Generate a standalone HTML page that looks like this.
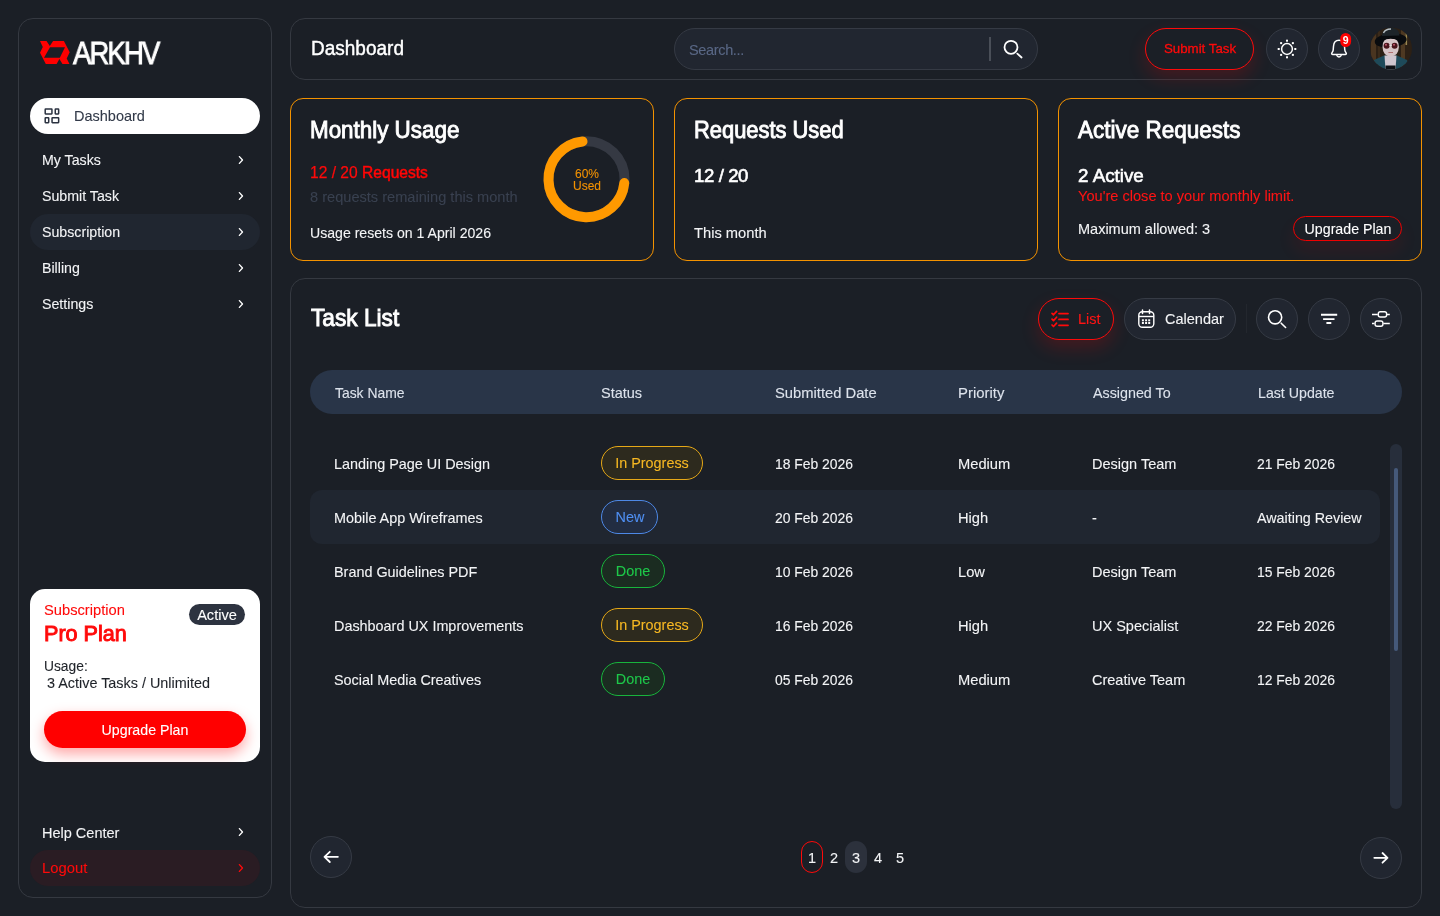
<!DOCTYPE html><html><head><meta charset="utf-8"><style>
html,body{margin:0;padding:0;}
body{width:1440px;height:916px;background:#1b1f26;position:relative;overflow:hidden;font-family:"Liberation Sans", sans-serif;}
.t{position:absolute;white-space:nowrap;line-height:1;will-change:transform;-webkit-text-stroke:0.1px currentColor;}
.b{position:absolute;box-sizing:border-box;}
svg{position:absolute;left:0;top:0;overflow:visible;}
</style></head><body>
<div class="b" style="left:18px;top:18px;width:254px;height:880px;border:1px solid #353941;border-radius:15px;"></div>
<div class="b" style="left:30px;top:98px;width:230px;height:36px;background:#ffffff;border-radius:18px;"></div>
<div class="b" style="left:30px;top:214px;width:230px;height:36px;background:#202630;border-radius:18px;"></div>
<div class="t" style="left:73.6px;top:109.00px;font-size:14.5px;color:#323a49;">Dashboard</div>
<div class="t" style="left:41.5px;top:153.00px;font-size:14.2px;color:#f3f4f6;">My Tasks</div>
<div class="t" style="left:41.5px;top:189.00px;font-size:14.2px;color:#f3f4f6;">Submit Task</div>
<div class="t" style="left:41.5px;top:225.00px;font-size:14.2px;color:#f3f4f6;">Subscription</div>
<div class="t" style="left:41.5px;top:261.00px;font-size:14.2px;color:#f3f4f6;">Billing</div>
<div class="t" style="left:41.5px;top:297.00px;font-size:14.2px;color:#f3f4f6;">Settings</div>
<div class="b" style="left:30px;top:589px;width:230px;height:173px;background:#ffffff;border-radius:15px;"></div>
<div class="t" style="left:44px;top:603.00px;font-size:14.7px;color:#ff0a0a;">Subscription</div>
<div class="t" style="left:44px;top:623.00px;font-size:21.6px;color:#ff0a0a;-webkit-text-stroke:0.95px #ff0a0a;">Pro Plan</div>
<div class="b" style="left:189px;top:604px;width:56px;height:21px;background:#2d3340;border-radius:11px;"></div>
<div class="t" style="left:17px;width:400px;text-align:center;top:608.00px;font-size:14.6px;color:#ffffff;">Active</div>
<div class="t" style="left:44px;top:660.00px;font-size:13.8px;color:#1f2329;">Usage:</div>
<div class="t" style="left:42.7px;top:676.00px;font-size:14.4px;color:#1f2329;">&nbsp;3 Active Tasks / Unlimited</div>
<div class="b" style="left:44px;top:711px;width:202px;height:37px;background:#ff0000;border-radius:19px;box-shadow:0 6px 14px rgba(255,0,0,0.35);"></div>
<div class="t" style="left:-55px;width:400px;text-align:center;top:723.00px;font-size:14.2px;color:#ffffff;">Upgrade Plan</div>
<div class="t" style="left:41.5px;top:826.00px;font-size:14.5px;color:#f3f4f6;">Help Center</div>
<div class="b" style="left:30px;top:850px;width:230px;height:36px;background:#2a1c23;border-radius:18px;"></div>
<div class="t" style="left:41.5px;top:861.00px;font-size:14.8px;color:#ff0a0a;">Logout</div>
<div class="b" style="left:290px;top:18px;width:1132px;height:62px;border:1px solid #353941;border-radius:15px;"></div>
<div class="t" style="left:311px;top:39.00px;font-size:19px;color:#ffffff;transform:scaleY(1.05);transform-origin:0 16px;-webkit-text-stroke:0.4px #ffffff;">Dashboard</div>
<div class="b" style="left:674px;top:28px;width:364px;height:42px;background:#212630;border:1px solid #353a44;border-radius:21px;"></div>
<div class="t" style="left:689px;top:43.00px;font-size:14.5px;color:#596785;letter-spacing:-0.35px;">Search...</div>
<div class="b" style="left:989px;top:37px;width:1.5px;height:24px;background:#4a4f58;"></div>
<div class="b" style="left:1145px;top:28px;width:109px;height:42px;border:1.5px solid #ff0a0a;border-radius:21px;box-shadow:0 8px 18px rgba(255,0,0,0.18);"></div>
<div class="t" style="left:999.5px;width:400px;text-align:center;top:42.00px;font-size:13.3px;color:#ff0a0a;-webkit-text-stroke:0.3px #ff0a0a;">Submit Task</div>
<div class="b" style="left:1266px;top:28px;width:42px;height:42px;background:#212630;border:1px solid #363b45;border-radius:50%;"></div>
<div class="b" style="left:1318px;top:28px;width:42px;height:42px;background:#212630;border:1px solid #363b45;border-radius:50%;"></div>
<div class="b" style="left:290px;top:98px;width:364px;height:163px;border:1px solid #f39200;border-radius:13px;"></div>
<div class="b" style="left:674px;top:98px;width:364px;height:163px;border:1px solid #f39200;border-radius:13px;"></div>
<div class="b" style="left:1058px;top:98px;width:364px;height:163px;border:1px solid #f39200;border-radius:13px;"></div>
<div class="t" style="left:310.3px;top:120.00px;font-size:22.4px;color:#ffffff;transform:scaleY(1.05);transform-origin:0 18px;-webkit-text-stroke:0.85px #ffffff;">Monthly Usage</div>
<div class="t" style="left:310px;top:165.00px;font-size:15.6px;color:#ff0a0a;-webkit-text-stroke:0.25px #ff0a0a;">12 / 20 <span style="-webkit-text-stroke:0.55px #ff0000">Requests</span></div>
<div class="t" style="left:310px;top:190.00px;font-size:14.6px;color:#394150;">8 requests remaining this month</div>
<div class="t" style="left:310px;top:226.00px;font-size:14.1px;color:#f3f4f6;">Usage resets on 1 April 2026</div>
<div class="t" style="left:386.5px;width:400px;text-align:center;top:168.00px;font-size:12px;color:#f39200;">60%</div>
<div class="t" style="left:386.5px;width:400px;text-align:center;top:180.00px;font-size:12px;color:#f39200;">Used</div>
<div class="t" style="left:694.3px;top:120.00px;font-size:21.9px;color:#ffffff;transform:scaleY(1.06);transform-origin:0 18px;-webkit-text-stroke:0.85px #ffffff;">Requests Used</div>
<div class="t" style="left:694.3px;top:167.00px;font-size:18.6px;color:#ffffff;-webkit-text-stroke:0.6px #ffffff;letter-spacing:-0.4px;">12 / 20</div>
<div class="t" style="left:694.3px;top:226.00px;font-size:14.7px;color:#f3f4f6;">This month</div>
<div class="t" style="left:1078.3px;top:120.00px;font-size:22.5px;color:#ffffff;transform:scaleY(1.05);transform-origin:0 18px;-webkit-text-stroke:0.85px #ffffff;">Active Requests</div>
<div class="t" style="left:1078.3px;top:167.00px;font-size:18.8px;color:#ffffff;-webkit-text-stroke:0.6px #ffffff;">2 Active</div>
<div class="t" style="left:1078.3px;top:189.00px;font-size:14.6px;color:#ff1414;">You're close to your monthly limit.</div>
<div class="t" style="left:1078.3px;top:222.00px;font-size:14.5px;color:#f3f4f6;">Maximum allowed: 3</div>
<div class="b" style="left:1293px;top:216px;width:109px;height:25px;border:1.5px solid #f00000;border-radius:13px;box-shadow:0 10px 18px rgba(255,0,0,0.09);"></div>
<div class="t" style="left:1147.5px;width:400px;text-align:center;top:222.00px;font-size:14.2px;color:#ffffff;">Upgrade Plan</div>
<div class="b" style="left:290px;top:278px;width:1132px;height:630px;border:1px solid #353941;border-radius:15px;"></div>
<div class="t" style="left:310.7px;top:307.00px;font-size:22.7px;color:#ffffff;transform:scaleY(1.09);transform-origin:0 19px;-webkit-text-stroke:0.85px #ffffff;">Task List</div>
<div class="b" style="left:1038px;top:298px;width:76px;height:42px;border:1.5px solid #ff0a0a;border-radius:21px;box-shadow:0 8px 18px rgba(255,0,0,0.18);"></div>
<div class="t" style="left:1078.2px;top:312.00px;font-size:14.5px;color:#ff1414;">List</div>
<div class="b" style="left:1124px;top:298px;width:112px;height:42px;background:#212630;border:1px solid #363b45;border-radius:21px;"></div>
<div class="t" style="left:1164.6px;top:312.00px;font-size:14.5px;color:#f3f4f6;">Calendar</div>
<div class="b" style="left:1246px;top:304px;width:1px;height:29px;background:#23272e;"></div>
<div class="b" style="left:1256px;top:298px;width:42px;height:42px;background:#212630;border:1px solid #363b45;border-radius:50%;"></div>
<div class="b" style="left:1308px;top:298px;width:42px;height:42px;background:#212630;border:1px solid #363b45;border-radius:50%;"></div>
<div class="b" style="left:1360px;top:298px;width:42px;height:42px;background:#212630;border:1px solid #363b45;border-radius:50%;"></div>
<div class="b" style="left:310px;top:370px;width:1092px;height:44px;background:#293548;border-radius:22px;"></div>
<div class="t" style="left:334.5px;top:387.00px;font-size:13.9px;color:#dde3ec;">Task Name</div>
<div class="t" style="left:601px;top:386.00px;font-size:14.5px;color:#dde3ec;">Status</div>
<div class="t" style="left:775px;top:386.00px;font-size:14.75px;color:#dde3ec;">Submitted Date</div>
<div class="t" style="left:958px;top:386.00px;font-size:14.9px;color:#dde3ec;">Priority</div>
<div class="t" style="left:1092.6px;top:386.00px;font-size:14.3px;color:#dde3ec;">Assigned To</div>
<div class="t" style="left:1257.8px;top:386.00px;font-size:14.2px;color:#dde3ec;">Last Update</div>
<div class="b" style="left:310px;top:490px;width:1070px;height:54px;background:#202630;border-radius:12px;"></div>
<div class="t" style="left:334px;top:457.00px;font-size:14.4px;color:#f3f4f6;">Landing Page UI Design</div>
<div class="b" style="left:601px;top:446px;width:102px;height:34px;background:#2d2a1e;border:1.5px solid #e6a817;border-radius:17px;"></div>
<div class="t" style="left:452.0px;width:400px;text-align:center;top:456.00px;font-size:14.4px;color:#f7b823;">In Progress</div>
<div class="t" style="left:775px;top:458.00px;font-size:13.9px;color:#f3f4f6;">18 Feb 2026</div>
<div class="t" style="left:958px;top:457.00px;font-size:14.7px;color:#f3f4f6;">Medium</div>
<div class="t" style="left:1092px;top:457.00px;font-size:14.5px;color:#f3f4f6;">Design Team</div>
<div class="t" style="left:1257px;top:458.00px;font-size:13.9px;color:#f3f4f6;">21 Feb 2026</div>
<div class="t" style="left:334px;top:511.00px;font-size:14.4px;color:#f3f4f6;">Mobile App Wireframes</div>
<div class="b" style="left:601px;top:500px;width:57px;height:34px;background:#222d42;border:1.5px solid #4d88e6;border-radius:17px;"></div>
<div class="t" style="left:429.5px;width:400px;text-align:center;top:510.00px;font-size:14.4px;color:#4f8ff2;">New</div>
<div class="t" style="left:775px;top:512.00px;font-size:13.9px;color:#f3f4f6;">20 Feb 2026</div>
<div class="t" style="left:958px;top:511.00px;font-size:14.7px;color:#f3f4f6;">High</div>
<div class="t" style="left:1092px;top:511.00px;font-size:14.5px;color:#f3f4f6;">-</div>
<div class="t" style="left:1257px;top:511.00px;font-size:14.3px;color:#f3f4f6;">Awaiting Review</div>
<div class="t" style="left:334px;top:565.00px;font-size:14.4px;color:#f3f4f6;">Brand Guidelines PDF</div>
<div class="b" style="left:601px;top:554px;width:64px;height:34px;background:#1b2c21;border:1.5px solid #18b43c;border-radius:17px;"></div>
<div class="t" style="left:433.0px;width:400px;text-align:center;top:564.00px;font-size:14.4px;color:#1ec84a;">Done</div>
<div class="t" style="left:775px;top:566.00px;font-size:13.9px;color:#f3f4f6;">10 Feb 2026</div>
<div class="t" style="left:958px;top:565.00px;font-size:14.7px;color:#f3f4f6;">Low</div>
<div class="t" style="left:1092px;top:565.00px;font-size:14.5px;color:#f3f4f6;">Design Team</div>
<div class="t" style="left:1257px;top:566.00px;font-size:13.9px;color:#f3f4f6;">15 Feb 2026</div>
<div class="t" style="left:334px;top:619.00px;font-size:14.4px;color:#f3f4f6;">Dashboard UX Improvements</div>
<div class="b" style="left:601px;top:608px;width:102px;height:34px;background:#2d2a1e;border:1.5px solid #e6a817;border-radius:17px;"></div>
<div class="t" style="left:452.0px;width:400px;text-align:center;top:618.00px;font-size:14.4px;color:#f7b823;">In Progress</div>
<div class="t" style="left:775px;top:620.00px;font-size:13.9px;color:#f3f4f6;">16 Feb 2026</div>
<div class="t" style="left:958px;top:619.00px;font-size:14.7px;color:#f3f4f6;">High</div>
<div class="t" style="left:1092px;top:619.00px;font-size:14.5px;color:#f3f4f6;">UX Specialist</div>
<div class="t" style="left:1257px;top:620.00px;font-size:13.9px;color:#f3f4f6;">22 Feb 2026</div>
<div class="t" style="left:334px;top:673.00px;font-size:14.4px;color:#f3f4f6;">Social Media Creatives</div>
<div class="b" style="left:601px;top:662px;width:64px;height:34px;background:#1b2c21;border:1.5px solid #18b43c;border-radius:17px;"></div>
<div class="t" style="left:433.0px;width:400px;text-align:center;top:672.00px;font-size:14.4px;color:#1ec84a;">Done</div>
<div class="t" style="left:775px;top:674.00px;font-size:13.9px;color:#f3f4f6;">05 Feb 2026</div>
<div class="t" style="left:958px;top:673.00px;font-size:14.7px;color:#f3f4f6;">Medium</div>
<div class="t" style="left:1092px;top:673.00px;font-size:14.5px;color:#f3f4f6;">Creative Team</div>
<div class="t" style="left:1257px;top:674.00px;font-size:13.9px;color:#f3f4f6;">12 Feb 2026</div>
<div class="b" style="left:1390px;top:444px;width:12px;height:365px;background:#272e3b;border-radius:6px;"></div>
<div class="b" style="left:1394px;top:468px;width:4px;height:183px;background:#45597a;border-radius:2px;"></div>
<div class="b" style="left:310px;top:836px;width:42px;height:42px;background:#212630;border:1px solid #363b45;border-radius:50%;"></div>
<div class="b" style="left:1360px;top:837px;width:42px;height:42px;background:#212630;border:1px solid #363b45;border-radius:50%;"></div>
<div class="b" style="left:801px;top:841px;width:22px;height:32px;border:1.5px solid #ff0a0a;border-radius:11px;"></div>
<div class="b" style="left:845px;top:841px;width:22px;height:32px;background:#2c313c;border-radius:11px;"></div>
<div class="t" style="left:612.2px;width:400px;text-align:center;top:851.00px;font-size:14.5px;color:#f3f4f6;">1</div>
<div class="t" style="left:634.2px;width:400px;text-align:center;top:851.00px;font-size:14.5px;color:#f3f4f6;">2</div>
<div class="t" style="left:656.2px;width:400px;text-align:center;top:851.00px;font-size:14.5px;color:#f3f4f6;">3</div>
<div class="t" style="left:678.2px;width:400px;text-align:center;top:851.00px;font-size:14.5px;color:#f3f4f6;">4</div>
<div class="t" style="left:700.2px;width:400px;text-align:center;top:851.00px;font-size:14.5px;color:#f3f4f6;">5</div>
<svg width="1440" height="916" viewBox="0 0 1440 916">
<path fill="#ff0000" fill-rule="evenodd" d="M40 41.1 L46.5 41.1 L49.8 46 L53.1 41.1 L63.9 41.1 L69.7 52.2 L66.7 58.4 L69.5 63.9 L62.5 63.9 L59.4 59.1 L56.6 63.9 L45.8 63.9 L40 52.8 L42.8 47 Z M50 47.2 L65 47.2 L59.8 57.7 L44 57.7 Z"/>
<g fill="none" stroke="#2b3240" stroke-width="1.5"><rect x="45.2" y="109.05" width="6.75" height="4.9" rx="0.4"/><rect x="55.25" y="109.05" width="3.4" height="4.9" rx="0.4"/><rect x="45.2" y="117.75" width="3.5" height="4.9" rx="0.4"/><rect x="52.05" y="117.75" width="6.6" height="4.9" rx="0.4"/></g>
<path d="M239.4 156.6 L242.5 160 L239.4 163.4" fill="none" stroke="#ffffff" stroke-width="1.35" stroke-linecap="round" stroke-linejoin="round"/>
<path d="M239.4 192.6 L242.5 196 L239.4 199.4" fill="none" stroke="#ffffff" stroke-width="1.35" stroke-linecap="round" stroke-linejoin="round"/>
<path d="M239.4 228.6 L242.5 232 L239.4 235.4" fill="none" stroke="#ffffff" stroke-width="1.35" stroke-linecap="round" stroke-linejoin="round"/>
<path d="M239.4 264.6 L242.5 268 L239.4 271.4" fill="none" stroke="#ffffff" stroke-width="1.35" stroke-linecap="round" stroke-linejoin="round"/>
<path d="M239.4 300.6 L242.5 304 L239.4 307.4" fill="none" stroke="#ffffff" stroke-width="1.35" stroke-linecap="round" stroke-linejoin="round"/>
<path d="M239.4 828.6 L242.5 832 L239.4 835.4" fill="none" stroke="#ffffff" stroke-width="1.35" stroke-linecap="round" stroke-linejoin="round"/>
<path d="M239.4 864.6 L242.5 868 L239.4 871.4" fill="none" stroke="#ff0a0a" stroke-width="1.35" stroke-linecap="round" stroke-linejoin="round"/>
<circle cx="1011" cy="47.3" r="6.5" fill="none" stroke="#ffffff" stroke-width="1.8"/>
<path d="M1017.3 53.6 L1021.6 57.5" stroke="#ffffff" stroke-width="1.8" stroke-linecap="round"/>
<circle cx="1287" cy="49" r="5.4" fill="none" stroke="#ffffff" stroke-width="1.5"/>
<rect x="1294.30" y="48.00" width="2" height="2" fill="#ffffff"/>
<rect x="1291.87" y="53.87" width="2" height="2" fill="#ffffff"/>
<rect x="1286.00" y="56.30" width="2" height="2" fill="#ffffff"/>
<rect x="1280.13" y="53.87" width="2" height="2" fill="#ffffff"/>
<rect x="1277.70" y="48.00" width="2" height="2" fill="#ffffff"/>
<rect x="1280.13" y="42.13" width="2" height="2" fill="#ffffff"/>
<rect x="1286.00" y="39.70" width="2" height="2" fill="#ffffff"/>
<rect x="1291.87" y="42.13" width="2" height="2" fill="#ffffff"/>
<path d="M1339 40.3 C1335.8 40.3 1333.7 42.8 1333.5 46.2 L1333.2 50 C1333.1 51.5 1332.3 52.3 1331.8 53 C1331.4 53.7 1331.9 54.4 1332.8 54.4 L1345.2 54.4 C1346.1 54.4 1346.6 53.7 1346.2 53 C1345.7 52.3 1344.9 51.5 1344.8 50 L1344.5 46.2 C1344.3 42.8 1342.2 40.3 1339 40.3 Z" fill="none" stroke="#ffffff" stroke-width="1.5" stroke-linejoin="round"/>
<path d="M1336.9 55.6 Q1339 58.3 1341.1 55.6" fill="none" stroke="#ffffff" stroke-width="1.5" stroke-linecap="round"/>
<rect x="1340.3" y="33" width="10.8" height="14" rx="5.4" fill="#ff0000"/>
<text x="1345.7" y="44.2" font-family="Liberation Sans" font-weight="700" font-size="10.5" fill="#ffffff" text-anchor="middle">9</text>
<defs><clipPath id="av"><circle cx="1391" cy="48.5" r="21"/></clipPath></defs>
<g clip-path="url(#av)"><rect x="1370" y="27.5" width="42" height="42" fill="#2c2015"/><rect x="1371" y="27.5" width="5" height="42" fill="#4a3520"/><rect x="1378" y="27.5" width="2" height="42" fill="#3a2a1a"/><rect x="1401" y="27.5" width="4" height="42" fill="#4e3922"/><rect x="1405.5" y="33" width="1.6" height="12" fill="#9a8650"/><path d="M1371 69.5 L1374 60 L1384 55.5 L1397 55.5 L1407 60 L1411 69.5 Z" fill="#1e4a5a"/><path d="M1384.5 55.5 L1396.5 55.5 L1395.5 69.5 L1385.5 69.5 Z" fill="#cfc6cf"/><path d="M1385.5 65.5 L1395.5 65.5 L1395.5 69.5 L1385.5 69.5 Z" fill="#0e1115"/><ellipse cx="1390.7" cy="40.5" rx="16" ry="7.2" fill="#090b0e" transform="rotate(-5 1390.7 40.5)"/><path d="M1382 36 Q1382.5 28.3 1391 27.8 Q1399.5 28.3 1399.5 35.5 Z" fill="#1d2429"/><path d="M1383.5 33 Q1385 29.2 1391 29" stroke="#b8c0c4" stroke-width="1.4" fill="none"/><path d="M1382.5 47 Q1382 38.5 1390.7 38 Q1399.4 38.5 1398.9 47 Q1398.4 56.2 1390.7 56.6 Q1383 56.2 1382.5 47 Z" fill="#d6c4c6"/><path d="M1380.5 39.2 Q1390.7 36 1401 39.2" stroke="#090b0e" stroke-width="2.2" fill="none"/><circle cx="1386.6" cy="45.8" r="3" fill="#4a141a"/><circle cx="1394.6" cy="45.8" r="3" fill="#4a141a"/><circle cx="1386" cy="44.8" r="1" fill="#c45a70"/><circle cx="1394" cy="44.8" r="1" fill="#c45a70"/><rect x="1389.3" y="44.9" width="2.6" height="0.9" fill="#e8e8e8"/><path d="M1388.4 52.5 L1393 52.5" stroke="#b07070" stroke-width="1"/></g>
<circle cx="586.5" cy="179.2" r="38" fill="none" stroke="#353943" stroke-width="10"/>
<path d="M582.53 141.41 A38 38 0 1 0 624.31 183.04" fill="none" stroke="#ff9900" stroke-width="10" stroke-linecap="round"/>
<path d="M1052 313.30 L1053.5 314.80 L1056.6 311.40" fill="none" stroke="#ff0a0a" stroke-width="1.7" stroke-linecap="round" stroke-linejoin="round"/>
<path d="M1059 313.60 L1068 313.60" stroke="#ff0a0a" stroke-width="1.8" stroke-linecap="round"/>
<path d="M1052 319.10 L1053.5 320.60 L1056.6 317.20" fill="none" stroke="#ff0a0a" stroke-width="1.7" stroke-linecap="round" stroke-linejoin="round"/>
<path d="M1059 319.40 L1068 319.40" stroke="#ff0a0a" stroke-width="1.8" stroke-linecap="round"/>
<path d="M1052 325.00 L1053.5 326.50 L1056.6 323.10" fill="none" stroke="#ff0a0a" stroke-width="1.7" stroke-linecap="round" stroke-linejoin="round"/>
<path d="M1059 325.30 L1068 325.30" stroke="#ff0a0a" stroke-width="1.8" stroke-linecap="round"/>
<rect x="1138.8" y="311.7" width="15" height="15.5" rx="3.5" fill="none" stroke="#ffffff" stroke-width="1.4"/>
<path d="M1138.8 316.5 L1153.8 316.5" stroke="#ffffff" stroke-width="1.4"/>
<path d="M1142.5 310 L1142.5 313.6 M1149.5 310 L1149.5 313.6" stroke="#ffffff" stroke-width="1.5" stroke-linecap="round"/>
<rect x="1141.90" y="319.30" width="2" height="2" fill="#ffffff"/>
<rect x="1141.90" y="322.00" width="2" height="2" fill="#ffffff"/>
<rect x="1145.10" y="319.30" width="2" height="2" fill="#ffffff"/>
<rect x="1145.10" y="322.00" width="2" height="2" fill="#ffffff"/>
<rect x="1148.20" y="319.30" width="2" height="2" fill="#ffffff"/>
<rect x="1148.20" y="322.00" width="2" height="2" fill="#ffffff"/>
<circle cx="1275.1" cy="317.3" r="6.6" fill="none" stroke="#ffffff" stroke-width="1.6"/>
<path d="M1281.2 323.2 L1285.6 327.5" stroke="#ffffff" stroke-width="1.6" stroke-linecap="round"/>
<path d="M1321 314.8 L1337.2 314.8 M1323.1 319.1 L1334.5 319.1 M1326.4 323 L1331.3 323" stroke="#ffffff" stroke-width="1.9"/>
<path d="M1372 314.4 L1377.8 314.4 M1387 314.4 L1389.8 314.4 M1372 323.5 L1374.6 323.5 M1383.3 323.5 L1389.8 323.5" stroke="#ffffff" stroke-width="1.5"/>
<rect x="1378.3" y="311.8" width="8.3" height="5.2" rx="2" fill="none" stroke="#ffffff" stroke-width="1.4"/>
<rect x="1375.1" y="321" width="7.8" height="5.2" rx="2" fill="none" stroke="#ffffff" stroke-width="1.4"/>
<path d="M337.9 856.8 L324.5 856.8 M329.8 851.8 L324.5 856.8 L329.8 862" fill="none" stroke="#ffffff" stroke-width="1.8" stroke-linecap="round" stroke-linejoin="round"/>
<path d="M1374.3 857.8 L1387.5 857.8 M1382.5 853 L1387.5 857.8 L1382.5 862.7" fill="none" stroke="#ffffff" stroke-width="1.8" stroke-linecap="round" stroke-linejoin="round"/>
</svg>
<div class="t" style="left:72.5px;top:38px;font-size:31.5px;color:#ffffff;transform:scaleX(0.875);transform-origin:0 0;letter-spacing:-2.2px;-webkit-text-stroke:0.9px #ffffff;">ARKHV</div>
</body></html>
